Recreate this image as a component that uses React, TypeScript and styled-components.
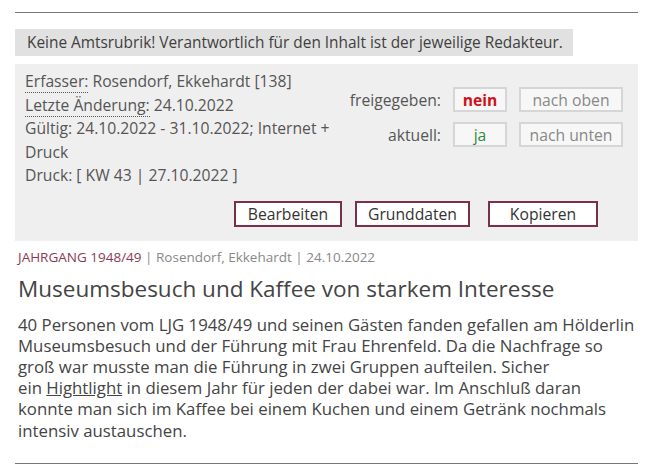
import React from "react";
import styled, { createGlobalStyle } from "styled-components";

const Global = createGlobalStyle`
  html, body { margin: 0; padding: 0; background: #fff; }
  body { font-family: "Open Sans", "Liberation Sans", sans-serif; color: #444; }
`;

const Page = styled.div`
  width: 623px;
  margin: 0 0 0 15px;
  padding-top: 12px;
`;

const Rule = styled.hr<{ $top?: number }>`
  border: none;
  border-top: 1px solid #777;
  margin: ${(p) => p.$top ?? 0}px 0 0 0;
  height: 0;
`;

const Notice = styled.div`
  display: inline-block;
  margin-top: 16px;
  background: #e1e1e1;
  padding: 4px 10px 4px 12px;
  font-size: 15.4px;
  line-height: 19px;
  color: #3f3f3f;
`;

const Panel = styled.div`
  margin-top: 8px;
  background: #efefef;
  padding: 6px 10px 14px 10px;
`;

const PanelTop = styled.div`
  display: flex;
  justify-content: space-between;
`;

const Info = styled.div`
  width: 320px;
  font-size: 15.7px;
  line-height: 23.5px;
  color: #555;
`;

const Abbr = styled.span`
  border-bottom: 1px dotted #555;
`;

const Status = styled.div`
  display: grid;
  grid-template-columns: auto 54px 104px;
  column-gap: 12px;
  row-gap: 10px;
  align-items: center;
  margin-top: 17px;
  margin-right: 5px;
  align-self: flex-start;
`;

const Label = styled.span`
  text-align: right;
  font-size: 15.7px;
  color: #555;
`;

const Box = styled.span<{ $color?: string; $bold?: boolean }>`
  box-sizing: border-box;
  height: 25px;
  border: 2px solid #d6d6d6;
  background: #f7f7f7;
  display: flex;
  align-items: center;
  justify-content: center;
  font-size: 15.7px;
  color: ${(p) => p.$color ?? "#888"};
  font-weight: ${(p) => (p.$bold ? 700 : 400)};
`;

const Actions = styled.div`
  display: flex;
  justify-content: flex-end;
  margin-top: 13px;
  margin-right: 30px;
`;

const Button = styled.button<{ $w: number; $gap?: number }>`
  box-sizing: border-box;
  width: ${(p) => p.$w}px;
  margin-left: ${(p) => p.$gap ?? 0}px;
  height: 26px;
  border: 2px solid #7b2f4c;
  background: #fff;
  font-family: "Open Sans", "Liberation Sans", sans-serif;
  font-size: 15.7px;
  color: #333;
  padding: 0;
`;

const Meta = styled.div`
  margin-top: 7px;
  font-size: 13.5px;
  line-height: 18px;
  color: #888;
  padding-left: 3px;
`;

const Rubric = styled.span`
  color: #8a3a52;
`;

const Title = styled.h1`
  margin: 8px 0 0 3px;
  font-weight: 400;
  font-size: 22.5px;
  line-height: 30px;
  color: #444;
`;

const Body = styled.p`
  margin: 10px 0 0 3px;
  font-size: 16.8px;
  line-height: 21.2px;
  color: #444;
`;

const Link = styled.a`
  color: #444;
  text-decoration: underline;
`;

export default function App() {
  return (
    <>
      <Global />
      <Page>
        <Rule />
        <Notice>Keine Amtsrubrik! Verantwortlich für den Inhalt ist der jeweilige Redakteur.</Notice>
        <Panel>
          <PanelTop>
            <Info>
              <Abbr>Erfasser:</Abbr> Rosendorf, Ekkehardt [138]
              <br />
              <Abbr>Letzte Änderung:</Abbr> 24.10.2022
              <br />
              Gültig: 24.10.2022 - 31.10.2022; Internet + Druck
              <br />
              Druck: [ KW 43 | 27.10.2022 ]
            </Info>
            <Status>
              <Label>freigegeben:</Label>
              <Box $color="#d0101a" $bold>nein</Box>
              <Box>nach oben</Box>
              <Label>aktuell:</Label>
              <Box $color="#2e8b3a">ja</Box>
              <Box>nach unten</Box>
            </Status>
          </PanelTop>
          <Actions>
            <Button $w={108}>Bearbeiten</Button>
            <Button $w={115} $gap={13}>Grunddaten</Button>
            <Button $w={110} $gap={18}>Kopieren</Button>
          </Actions>
        </Panel>
        <Meta>
          <Rubric>JAHRGANG 1948/49</Rubric> | Rosendorf, Ekkehardt | 24.10.2022
        </Meta>
        <Title>Museumsbesuch und Kaffee von starkem Interesse</Title>
        <Body>
          40 Personen vom LJG 1948/49 und seinen Gästen fanden gefallen am Hölderlin Museumsbesuch und der
          Führung mit Frau Ehrenfeld. Da die Nachfrage so groß war musste man die Führung in zwei Gruppen
          aufteilen. Sicher
          <br />
          ein <Link href="#">Hightlight</Link> in diesem Jahr für jeden der dabei war. Im Anschluß daran
          konnte man sich im Kaffee bei einem Kuchen und einem Getränk nochmals intensiv austauschen.
        </Body>
        <Rule $top={22} />
      </Page>
    </>
  );
}
